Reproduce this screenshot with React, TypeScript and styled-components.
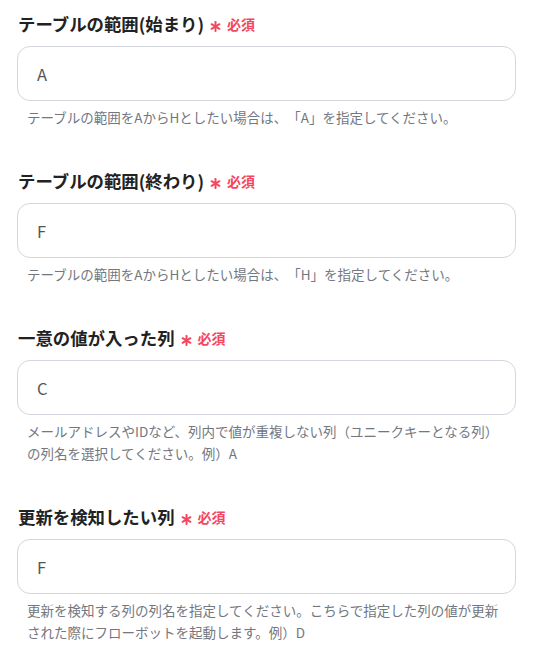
import React from 'react';
import styled, { createGlobalStyle } from 'styled-components';

const GlobalStyle = createGlobalStyle`
  body {
    margin: 0;
    background: #ffffff;
    font-family: "Noto Sans CJK JP", "Noto Sans", sans-serif;
    text-spacing-trim: space-all;
  }
`;

const Page = styled.div`
  padding: 12px 0 0 17px;
  width: 499px;
`;

const Field = styled.div`
  display: flex;
  flex-direction: column;
  margin-bottom: 41px;
`;

const LabelRow = styled.div`
  display: flex;
  align-items: center;
  height: 24px;
  padding-left: 1px;
`;

const Label = styled.span`
  font-size: 17.4px;
  font-weight: 700;
  color: #222222;
  line-height: 24px;
`;

const Required = styled.span`
  display: inline-flex;
  align-items: center;
  margin-left: 6px;
  color: #f4475f;
  font-size: 14px;
  font-weight: 700;
  line-height: 24px;

  svg {
    margin-right: 6px;
    margin-top: 4px;
  }
`;

const Input = styled.input`
  box-sizing: border-box;
  width: 100%;
  height: 55px;
  margin-top: 10px;
  padding: 0 19px;
  border: 1px solid #d3d6dc;
  border-radius: 13px;
  background: #ffffff;
  font-family: "Noto Sans CJK JP", "Noto Sans", sans-serif;
  font-size: 16.5px;
  color: #555555;
  outline: none;
`;

const Help = styled.p`
  margin: 5px 0 0;
  padding-left: 10px;
  width: 480px;
  font-size: 13.5px;
  line-height: 22px;
  color: #737780;
  text-spacing-trim: space-all;
`;

const Asterisk = () => (
  <svg width="11" height="11" viewBox="0 0 12 12">
    <g stroke="#f4475f" strokeWidth="2.2" strokeLinecap="round">
      <line x1="6" y1="1" x2="6" y2="11" />
      <line x1="1.7" y1="3.5" x2="10.3" y2="8.5" />
      <line x1="1.7" y1="8.5" x2="10.3" y2="3.5" />
    </g>
  </svg>
);

const fields = [
  {
    label: 'テーブルの範囲(始まり)',
    value: 'A',
    help: 'テーブルの範囲をAからHとしたい場合は、「A」を指定してください。',
  },
  {
    label: 'テーブルの範囲(終わり)',
    value: 'F',
    help: 'テーブルの範囲をAからHとしたい場合は、「H」を指定してください。',
  },
  {
    label: '一意の値が入った列',
    value: 'C',
    help: 'メールアドレスやIDなど、列内で値が重複しない列（ユニークキーとなる列）の列名を選択してください。例）A',
  },
  {
    label: '更新を検知したい列',
    value: 'F',
    help: '更新を検知する列の列名を指定してください。こちらで指定した列の値が更新された際にフローボットを起動します。例）D',
  },
];

export default function App() {
  return (
    <>
      <GlobalStyle />
      <Page>
        {fields.map((f) => (
          <Field key={f.label}>
            <LabelRow>
              <Label>{f.label}</Label>
              <Required>
                <Asterisk />
                必須
              </Required>
            </LabelRow>
            <Input defaultValue={f.value} />
            <Help>{f.help}</Help>
          </Field>
        ))}
      </Page>
    </>
  );
}
